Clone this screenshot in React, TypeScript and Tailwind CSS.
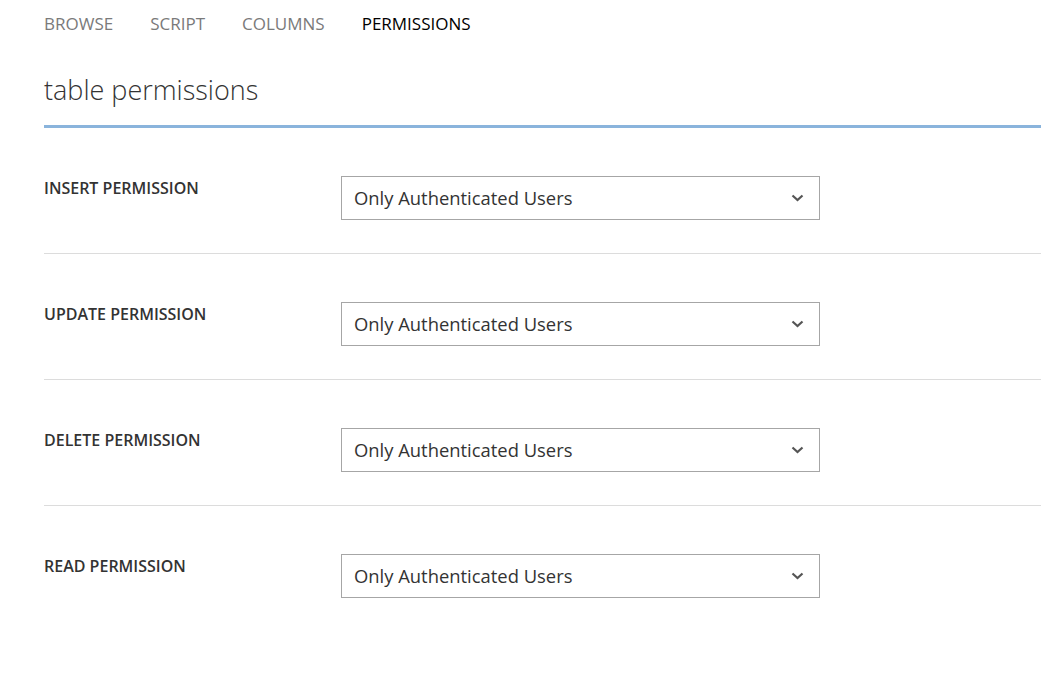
import React from "react";

const tabs = ["BROWSE", "SCRIPT", "COLUMNS", "PERMISSIONS"];
const permissions = ["INSERT PERMISSION", "UPDATE PERMISSION", "DELETE PERMISSION", "READ PERMISSION"];

const Chevron = () => (
  <svg width="13" height="8" viewBox="0 0 13 8" fill="none">
    <path d="M1.5 1.5 L6.5 6 L11.5 1.5" stroke="#555" strokeWidth="2.2" />
  </svg>
);

const PermissionRow = ({ label, last }: { label: string; last: boolean }) => (
  <div className={last ? "flex pt-[48px] pb-[33px]" : "flex pt-[48px] pb-[33px] border-b border-[#dcdcdc]"}>
    <div className="w-[297px] mt-[1px] text-[16px] leading-[22px] font-semibold text-[#333]">{label}</div>
    <button className="flex items-center justify-between w-[479px] h-[44px] pl-[12px] pr-[15px] border border-[#a6a6a6] bg-white text-[18.4px] text-[#333]">
      <span>Only Authenticated Users</span>
      <Chevron />
    </button>
  </div>
);

export default function App() {
  return (
    <div className="min-h-screen bg-white pl-[44px] font-['Open_Sans',sans-serif]">
      <nav className="flex gap-[37px] pt-[14px] text-[17px] leading-[20px]">
        {tabs.map((t) => (
          <span key={t} className={t === "PERMISSIONS" ? "text-black" : "text-[#7a7a7a]"}>
            {t}
          </span>
        ))}
      </nav>
      <h1 className="mt-[38px] text-[27px] leading-[36px] font-light text-[#333]">table permissions</h1>
      <div className="mt-[17px] h-[3px] bg-[#8ab4dc]" />
      {permissions.map((p, i) => (
        <PermissionRow key={p} label={p} last={i === permissions.length - 1} />
      ))}
    </div>
  );
}
